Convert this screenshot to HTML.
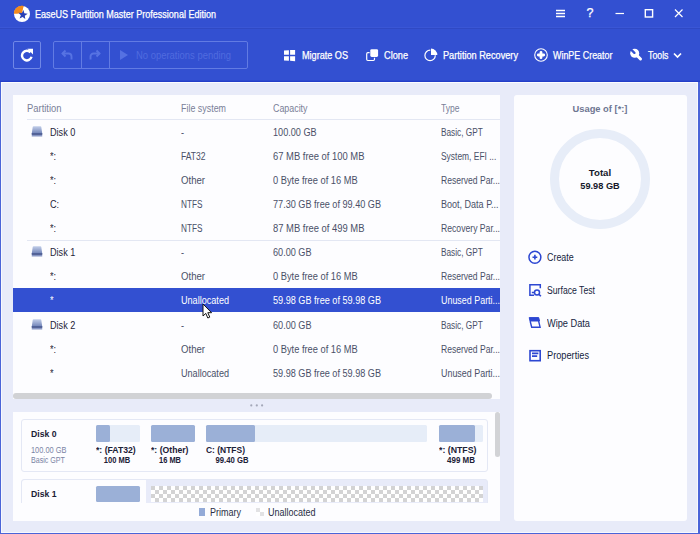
<!DOCTYPE html>
<html><head><meta charset="utf-8">
<style>
*{margin:0;padding:0;box-sizing:border-box}
html,body{width:700px;height:534px;overflow:hidden}
body{background:#e8ebf9;font-family:"Liberation Sans",sans-serif;position:relative;color:#2a2f45}
.abs{position:absolute}
.t{position:absolute;white-space:nowrap;line-height:12px;height:12px;font-size:10px;letter-spacing:0;transform:scaleX(.9);transform-origin:0 50%}
#win{position:absolute;left:0;top:0;width:700px;height:534px;border:1px solid #5b74dc;border-top:none}
#top{position:absolute;left:0;top:0;width:700px;height:82px;background:#3350d1}
#tsep{position:absolute;left:0;top:28px;width:700px;height:1px;background:#2f49c4}
.w{color:#fff;-webkit-text-stroke:0.250px #fff}
.hd{color:#7a8098}
.row{color:#4a5068}
.nm{color:#1f2438}
#lp{position:absolute;left:13px;top:95px;width:487px;height:304px;background:#fdfdff}
#bp{position:absolute;left:13px;top:412px;width:487px;height:109px;background:#fdfdff;overflow:hidden}
#rp{position:absolute;left:514px;top:95px;width:173px;height:426px;background:#fdfdff;border-radius:3px}

.hl{position:absolute;height:1px;background:#e3e7f3}
#sel{position:absolute;left:13px;top:288px;width:487px;height:24px;background:#3350d1}
.act{color:#151d3e}
.sel{color:#fff !important}
.g{color:#7a83a4}

</style></head><body>
<div id="top"></div><div id="tsep"></div><div class="abs" style="left:0;top:27px;width:700px;height:1px;background:#3a56d5"></div>

<div class="abs" style="left:0;top:81px;width:700px;height:1px;background:#233dc8"></div>
<div class="abs" style="left:0;top:80px;width:700px;height:1px;background:#2d49ce"></div>
<div class="abs" style="left:1px;top:82px;width:697px;height:1px;background:#fbfbff"></div>
<div class="abs" style="left:1px;top:82px;width:1px;height:451px;background:#f7f8fe"></div>
<div class="abs" style="left:697px;top:82px;width:1px;height:451px;background:#f7f8fe"></div>
<div class="abs" style="left:1px;top:532px;width:697px;height:1px;background:#f7f8fe"></div>
<div class="abs" style="left:0;top:82px;width:1px;height:452px;background:#4a64d8"></div>
<div class="abs" style="left:698px;top:82px;width:2px;height:452px;background:#4a64d8"></div>
<div class="abs" style="left:0;top:533px;width:700px;height:1px;background:#4a64d8"></div>
<!-- title -->
<svg class="abs" style="left:13.300px;top:4.600px" width="18" height="18" viewBox="0 0 18 18">
 <circle cx="9" cy="9" r="8" fill="#fff"/>
 <path d="M9 8.600L0.800 8.600A8.200 8.200 0 0 1 10.500 0.900L9.600 4.500A4.600 4.600 0 0 0 4.600 8.600Z" fill="#f28a1e"/>
 <path d="M9 8.600L0.800 8.600A8.200 8.200 0 0 1 10.500 0.900Z" fill="#f28a1e"/>
 <path d="M10.49 4.94L11.33 8.26L14.71 8.85L11.81 10.68L12.28 14.08L9.65 11.88L6.57 13.39L7.84 10.21L5.45 7.74L8.88 7.97Z" fill="#2b40b4"/>
</svg>
<div class="t w" style="left:35px;top:8.535px;transform:scaleX(0.902)">EaseUS Partition Master Professional Edition</div>

<!-- window controls -->
<svg class="abs" style="left:550px;top:4px" width="140" height="20" viewBox="0 0 140 20" fill="none" stroke="#fff" stroke-width="1.200">
 <path d="M6 6.500h9M6 9.500h9M6 12.500h9" stroke-width="1.400"/>
 <path d="M65.500 9.500h8.500" />
 <rect x="95.300" y="5.700" width="7.300" height="7.300" stroke-width="1.400"/>
 <path d="M125 5.500l7.500 7.500M132.500 5.500l-7.500 7.500"/>
</svg>
<div class="t w" style="left:586.5px;top:7.169px;font-size:12.5px;transform:scaleX(1)">?</div>

<!-- toolbar -->
<div class="abs" style="left:13px;top:41px;width:28px;height:28px;border:1px solid #7087e6;border-radius:2px"></div>
<svg class="abs" style="left:20px;top:48px" width="14" height="14" viewBox="0 0 14 14" fill="none" stroke="#fff" stroke-width="2.400">
 <path d="M10.400 4.400A4.800 4.800 0 1 0 11.500 8.700"/><path d="M7.400 0.800h5.600v5.600z" fill="#fff" stroke="none"/>
</svg>
<div class="abs" style="left:53px;top:41px;width:195px;height:28px;border:1px solid #627be3;border-radius:2px"></div>
<div class="abs" style="left:81px;top:42px;width:1px;height:26px;background:#627be3"></div>
<div class="abs" style="left:109px;top:42px;width:1px;height:26px;background:#627be3"></div>
<svg class="abs" style="left:60px;top:48px" width="14" height="14" viewBox="0 0 14 14" fill="none" stroke="#5773e3" stroke-width="1.900">
 <path d="M2.5 5.5h6a3 3 0 0 1 3 3v3"/><path d="M5.5 2.5l-3 3 3 3"/>
</svg>
<svg class="abs" style="left:88px;top:48px" width="14" height="14" viewBox="0 0 14 14" fill="none" stroke="#5773e3" stroke-width="1.900">
 <path d="M11.5 5.5h-6a3 3 0 0 0-3 3v3"/><path d="M8.500 2.5l3 3-3 3"/>
</svg>
<svg class="abs" style="left:119px;top:49px" width="10" height="12" viewBox="0 0 10 12"><path d="M1 1l8 5-8 5z" fill="#5571e2"/></svg>
<div class="t " style="left:136px;top:49.535px;color:#506bdf;transform:scaleX(0.944)">No operations pending</div>

<svg class="abs" style="left:284px;top:49.700px" width="12" height="12" viewBox="0 0 12 12" fill="#fff"><path d="M0 0.500L4.900 0.200V4.700H0z"/><path d="M6.100 0.100L11.100 -0.200V4.700H6.100z"/><path d="M0 6.200H4.900V10.700L0 10.400z"/><path d="M6.100 6.200H11.100V11.200L6.100 10.800z"/></svg>
<div class="t w" style="left:302px;top:49.535px;transform:scaleX(0.91)">Migrate OS</div>

<svg class="abs" style="left:366px;top:49px" width="13" height="13" viewBox="0 0 13 13"><rect x="0.700" y="3.700" width="7.800" height="7.800" rx="1.200" fill="none" stroke="#fff" stroke-width="1.200"/><rect x="3.600" y="-0.400" width="9.200" height="9.200" rx="1.800" fill="#3350d1"/><rect x="4.300" y="0.200" width="7.800" height="7.800" rx="1.400" fill="#fff"/></svg>
<div class="t w" style="left:384px;top:49.535px;transform:scaleX(0.919)">Clone</div>

<svg class="abs" style="left:424px;top:48px" width="15" height="14" viewBox="0 0 15 14"><circle cx="6.100" cy="7.400" r="5.200" fill="none" stroke="#fff" stroke-width="1.200"/><path d="M6.300 -0.300A7.500 7.500 0 0 1 13.800 7.200H6.300z" fill="#3350d1"/><path d="M7 0.600A6.300 6.300 0 0 1 13.300 6.900H7z" fill="#fff"/></svg>
<div class="t w" style="left:443px;top:49.535px;transform:scaleX(0.918)">Partition Recovery</div>

<svg class="abs" style="left:534px;top:48px" width="14" height="14" viewBox="0 0 14 14"><circle cx="7" cy="7" r="6.300" fill="none" stroke="#fff" stroke-width="1.100"/><path d="M7 4.300v5.400M4.300 7h5.400" stroke="#fff" stroke-width="2.800" stroke-linecap="round"/></svg>
<div class="t w" style="left:553px;top:49.535px;transform:scaleX(0.892)">WinPE Creator</div>

<svg class="abs" style="left:629px;top:48px" width="14" height="14" viewBox="0 0 14 14"><path d="M8 7.500l3.500 3.500" stroke="#fff" stroke-width="3" stroke-linecap="round"/><circle cx="5.700" cy="5.300" r="4.500" fill="#fff"/><path d="M1 0.500L5.400 4.900" stroke="#3350d1" stroke-width="2.300" stroke-linecap="round"/></svg>
<div class="t w" style="left:648.1px;top:49.535px;transform:scaleX(0.878)">Tools</div>
<svg class="abs" style="left:673px;top:52px" width="9" height="7" viewBox="0 0 9 7" fill="none" stroke="#fff" stroke-width="1.700"><path d="M1 1.500l3.500 3.500 3.500-3.500"/></svg>

<!-- left panel -->
<div id="lp"></div>
<div class="t hd" style="left:27px;top:102.535px;transform:scaleX(0.94)">Partition</div>
<div class="t hd" style="left:181px;top:102.535px;transform:scaleX(0.89)">File system</div>
<div class="t hd" style="left:273px;top:102.535px;transform:scaleX(0.887)">Capacity</div>
<div class="t hd" style="left:440.5px;top:102.535px;transform:scaleX(0.853)">Type</div>
<div class="hl" style="left:27px;top:119px;width:473px"></div>
<div class="hl" style="left:27px;top:240px;width:473px"></div>
<div id="sel"></div>
<svg class="abs" style="left:31px;top:126px" width="12" height="11" viewBox="0 0 12 11"><defs><linearGradient id="dg1" x1="0" y1="0" x2="0" y2="1"><stop offset="0" stop-color="#c3cfea"/><stop offset="1" stop-color="#6b7eb4"/></linearGradient></defs><path d="M2.600 0.200h6.800q0.800 0 0.900 0.800l1 7h-10.600l1-7q0.100-0.800 0.900-0.800z" fill="url(#dg1)"/><rect x="0.700" y="7.300" width="10.600" height="1.600" fill="#44548c"/><rect x="0.700" y="8.900" width="10.600" height="1.700" rx="0.600" fill="#8796c4"/></svg>
<div class="t nm " style="left:50px;top:126.535px;transform:scaleX(0.912)">Disk 0</div>
<div class="t row " style="left:181px;top:126.535px;transform:scaleX(0.912)">-</div>
<div class="t row " style="left:273px;top:126.535px;transform:scaleX(0.912)">100.00 GB</div>
<div class="t row " style="left:440.5px;top:126.535px;transform:scaleX(0.827)">Basic, GPT</div>
<div class="t nm " style="left:50px;top:150.535px;transform:scaleX(0.912)">*:</div>
<div class="t row " style="left:181px;top:150.535px;transform:scaleX(0.853)">FAT32</div>
<div class="t row " style="left:273px;top:150.535px;transform:scaleX(0.94)">67 MB free of 100 MB</div>
<div class="t row " style="left:440.5px;top:150.535px;transform:scaleX(0.843)">System, EFI ...</div>
<div class="t nm " style="left:50px;top:174.535px;transform:scaleX(0.912)">*:</div>
<div class="t row " style="left:181px;top:174.535px;transform:scaleX(0.96)">Other</div>
<div class="t row " style="left:273px;top:174.535px;transform:scaleX(0.929)">0 Byte free of 16 MB</div>
<div class="t row " style="left:440.5px;top:174.535px;transform:scaleX(0.856)">Reserved Par...</div>
<div class="t nm " style="left:50px;top:198.535px;transform:scaleX(0.912)">C:</div>
<div class="t row " style="left:181px;top:198.535px;transform:scaleX(0.823)">NTFS</div>
<div class="t row " style="left:273px;top:198.535px;transform:scaleX(0.912)">77.30 GB free of 99.40 GB</div>
<div class="t row " style="left:440.5px;top:198.535px;transform:scaleX(0.902)">Boot, Data P...</div>
<div class="t nm " style="left:50px;top:222.535px;transform:scaleX(0.912)">*:</div>
<div class="t row " style="left:181px;top:222.535px;transform:scaleX(0.823)">NTFS</div>
<div class="t row " style="left:273px;top:222.535px;transform:scaleX(0.94)">87 MB free of 499 MB</div>
<div class="t row " style="left:440.5px;top:222.535px;transform:scaleX(0.863)">Recovery Par...</div>
<svg class="abs" style="left:31px;top:246.4px" width="12" height="11" viewBox="0 0 12 11"><defs><linearGradient id="dg2" x1="0" y1="0" x2="0" y2="1"><stop offset="0" stop-color="#c3cfea"/><stop offset="1" stop-color="#6b7eb4"/></linearGradient></defs><path d="M2.600 0.200h6.800q0.800 0 0.900 0.800l1 7h-10.600l1-7q0.100-0.800 0.900-0.800z" fill="url(#dg2)"/><rect x="0.700" y="7.300" width="10.600" height="1.600" fill="#44548c"/><rect x="0.700" y="8.900" width="10.600" height="1.700" rx="0.600" fill="#8796c4"/></svg>
<div class="t nm " style="left:50px;top:246.535px;transform:scaleX(0.912)">Disk 1</div>
<div class="t row " style="left:181px;top:246.535px;transform:scaleX(0.912)">-</div>
<div class="t row " style="left:273px;top:246.535px;transform:scaleX(0.912)">60.00 GB</div>
<div class="t row " style="left:440.5px;top:246.535px;transform:scaleX(0.827)">Basic, GPT</div>
<div class="t nm " style="left:50px;top:270.535px;transform:scaleX(0.912)">*:</div>
<div class="t row " style="left:181px;top:270.535px;transform:scaleX(0.96)">Other</div>
<div class="t row " style="left:273px;top:270.535px;transform:scaleX(0.929)">0 Byte free of 16 MB</div>
<div class="t row " style="left:440.5px;top:270.535px;transform:scaleX(0.856)">Reserved Par...</div>
<div class="t nm sel" style="left:50px;top:294.535px;transform:scaleX(0.912)">*</div>
<div class="t row sel" style="left:181px;top:294.535px;transform:scaleX(0.909)">Unallocated</div>
<div class="t row sel" style="left:273px;top:294.535px;transform:scaleX(0.912)">59.98 GB free of 59.98 GB</div>
<div class="t row sel" style="left:440.5px;top:294.535px;transform:scaleX(0.892)">Unused Parti...</div>
<svg class="abs" style="left:31px;top:318.9px" width="12" height="11" viewBox="0 0 12 11"><defs><linearGradient id="dg3" x1="0" y1="0" x2="0" y2="1"><stop offset="0" stop-color="#c3cfea"/><stop offset="1" stop-color="#6b7eb4"/></linearGradient></defs><path d="M2.600 0.200h6.800q0.800 0 0.900 0.800l1 7h-10.600l1-7q0.100-0.800 0.900-0.800z" fill="url(#dg3)"/><rect x="0.700" y="7.300" width="10.600" height="1.600" fill="#44548c"/><rect x="0.700" y="8.900" width="10.600" height="1.700" rx="0.600" fill="#8796c4"/></svg>
<div class="t nm " style="left:50px;top:319.535px;transform:scaleX(0.912)">Disk 2</div>
<div class="t row " style="left:181px;top:319.535px;transform:scaleX(0.912)">-</div>
<div class="t row " style="left:273px;top:319.535px;transform:scaleX(0.912)">60.00 GB</div>
<div class="t row " style="left:440.5px;top:319.535px;transform:scaleX(0.827)">Basic, GPT</div>
<div class="t nm " style="left:50px;top:343.535px;transform:scaleX(0.912)">*:</div>
<div class="t row " style="left:181px;top:343.535px;transform:scaleX(0.96)">Other</div>
<div class="t row " style="left:273px;top:343.535px;transform:scaleX(0.929)">0 Byte free of 16 MB</div>
<div class="t row " style="left:440.5px;top:343.535px;transform:scaleX(0.856)">Reserved Par...</div>
<div class="t nm " style="left:50px;top:367.535px;transform:scaleX(0.912)">*</div>
<div class="t row " style="left:181px;top:367.535px;transform:scaleX(0.909)">Unallocated</div>
<div class="t row " style="left:273px;top:367.535px;transform:scaleX(0.912)">59.98 GB free of 59.98 GB</div>
<div class="t row " style="left:440.5px;top:367.535px;transform:scaleX(0.892)">Unused Parti...</div>
<div class="abs" style="left:13px;top:393px;width:479px;height:6px;background:#d1d2d5;border-radius:3px"></div>

<svg class="abs" style="left:245px;top:400px" width="24" height="10" viewBox="0 0 24 10" fill="#a3a7b8"><circle cx="6.300" cy="5.400" r="1.100"/><circle cx="11.800" cy="5.400" r="1.100"/><circle cx="17.100" cy="5.400" r="1.100"/></svg>
<!-- bottom panel -->
<div id="bp">
 <div class="abs" style="left:8px;top:7px;width:467px;height:53px;border:1px solid #e4e8f5;border-radius:3px"></div>
 <div class="abs" style="left:8px;top:67px;width:467px;height:52px;border:1px solid #e4e8f5;border-radius:3px;background:#e8ebf9"></div>
 <div class="abs" style="left:9px;top:68px;width:124px;height:50px;background:#fdfdff;border-radius:3px 0 0 3px"></div>
 <!-- disk0 -->
 <div class="abs" style="left:83px;top:13px;width:44px;height:17px;background:#e6edf8;border-radius:1.5px"></div>
 <div class="abs" style="left:83px;top:13px;width:14px;height:17px;background:#9bb0d7;border-radius:1.5px"></div>
 <div class="abs" style="left:138px;top:13px;width:44px;height:17px;background:#9bb0d7;border-radius:1.5px"></div>
 <div class="abs" style="left:193px;top:13px;width:221px;height:17px;background:#e6edf8;border-radius:1.5px"></div>
 <div class="abs" style="left:193px;top:13px;width:49px;height:17px;background:#9bb0d7;border-radius:1.5px"></div>
 <div class="abs" style="left:426px;top:13px;width:44px;height:17px;background:#e6edf8;border-radius:1.5px"></div>
 <div class="abs" style="left:426px;top:13px;width:36px;height:17px;background:#9bb0d7;border-radius:1.5px"></div>
 <!-- disk1 -->
 <div class="abs" style="left:83px;top:74px;width:44px;height:16px;background:#9bb0d7;border-radius:1.5px"></div>
 <div class="abs" style="left:138px;top:74px;width:332px;height:16px;background-color:#fff;background-image:conic-gradient(#fff 25%,#d3d3d4 0 50%,#fff 0 75%,#d3d3d4 0);background-size:8px 8px"></div>
 <!-- legend -->
 <div class="abs" style="left:0;top:91px;width:487px;height:18px;background:#fdfdff"></div>
 <div class="abs" style="left:185.500px;top:96px;width:6px;height:8px;background:#94abd8"></div>
 <div class="abs" style="left:243px;top:96px;width:8px;height:8px;background-image:conic-gradient(#fff 25%,#e2e2e4 0 50%,#fff 0 75%,#e2e2e4 0);background-size:8px 8px"></div>
<div class="t " style="left:17.5px;top:15.812px;font-size:9.2px;font-weight:bold;color:#1b2036;transform:scaleX(0.941)">Disk 0</div>
<div class="t g" style="left:17.5px;top:31.812px;font-size:9.2px;transform:scaleX(0.807)">100.00 GB</div>
<div class="t g" style="left:17.5px;top:41.812px;font-size:9.2px;transform:scaleX(0.773)">Basic GPT</div>
<div class="t " style="left:83px;top:31.812px;font-size:9.2px;font-weight:bold;color:#1b2036;transform:scaleX(0.942)">*: (FAT32)</div>
<div class="t " style="left:104.4px;transform-origin:50% 50%;top:41.812px;font-size:9.2px;font-weight:bold;color:#1b2036;transform:translateX(-50%) scaleX(0.82)">100 MB</div>
<div class="t " style="left:138px;top:31.812px;font-size:9.2px;font-weight:bold;color:#1b2036;transform:scaleX(0.941)">*: (Other)</div>
<div class="t " style="left:157px;transform-origin:50% 50%;top:41.812px;font-size:9.2px;font-weight:bold;color:#1b2036;transform:translateX(-50%) scaleX(0.812)">16 MB</div>
<div class="t " style="left:193px;top:31.812px;font-size:9.2px;font-weight:bold;color:#1b2036;transform:scaleX(0.92)">C: (NTFS)</div>
<div class="t " style="left:219.4px;transform-origin:50% 50%;top:41.812px;font-size:9.2px;font-weight:bold;color:#1b2036;transform:translateX(-50%) scaleX(0.838)">99.40 GB</div>
<div class="t " style="left:425.5px;top:31.812px;font-size:9.2px;font-weight:bold;color:#1b2036;transform:scaleX(0.953)">*: (NTFS)</div>
<div class="t " style="left:447.8px;transform-origin:50% 50%;top:41.812px;font-size:9.2px;font-weight:bold;color:#1b2036;transform:translateX(-50%) scaleX(0.869)">499 MB</div>
<div class="t " style="left:17.5px;top:75.812px;font-size:9.2px;font-weight:bold;color:#1b2036;transform:scaleX(0.941)">Disk 1</div>
<div class="t " style="left:197px;top:94.535px;color:#2a2f45;transform:scaleX(0.9)">Primary</div>
<div class="t " style="left:255px;top:94.535px;color:#2a2f45;transform:scaleX(0.899)">Unallocated</div>
</div>
<div class="abs" style="left:495px;top:412px;width:5px;height:45px;background:#d2d3d6;border-radius:3px"></div>
<!-- right panel -->
<div id="rp"></div>
<div class="t " style="left:599.6px;transform-origin:50% 50%;top:102.778px;font-size:9.3px;font-weight:bold;color:#6e7692;transform:translateX(-50%) scaleX(1.004)">Usage of [*:]</div>
<div class="t " style="left:600px;transform-origin:50% 50%;top:166.812px;font-size:9.2px;font-weight:bold;color:#14182a;transform:translateX(-50%) scaleX(1.047)">Total</div>
<div class="t " style="left:600px;transform-origin:50% 50%;top:179.812px;font-size:9.2px;font-weight:bold;color:#14182a;transform:translateX(-50%) scaleX(1.001)">59.98 GB</div>
<svg class="abs" style="left:550px;top:129px" width="100" height="100" viewBox="0 0 100 100"><circle cx="50" cy="50" r="45.500" fill="none" stroke="#e7edf8" stroke-width="9"/></svg>

<svg class="abs" style="left:522px;top:244px" width="30" height="130" viewBox="0 0 30 130" fill="none" stroke="#2d47d2" stroke-width="1.500">
 <circle cx="12.900" cy="13.200" r="5.950"/><path d="M12.900 10.800v4.800M10.500 13.200h4.800" stroke-width="1.600"/>
 <path d="M18.300 44.200V40.700H7.900v10.600h4.200M9.800 48.400h2.300"/><circle cx="15" cy="48.500" r="2.500"/><path d="M16.900 50.400l2 1.900"/>
 <path d="M7.200 73.600h9.500l0.800 3.400h-9.500z" fill="#2d47d2" stroke-width="1"/><path d="M8.100 77l1.600 6.200h8.400l-1.500-6.200" stroke-width="1.400"/>
 <rect x="8" y="106.700" width="10.200" height="10" stroke-width="1.600"/><path d="M10 109.400h6.400M10 112.200h5.200" stroke-width="1.700"/>
</svg>
<div class="t act" style="left:547px;top:251.535px;transform:scaleX(0.89)">Create</div>
<div class="t act" style="left:547px;top:284.535px;transform:scaleX(0.866)">Surface Test</div>
<div class="t act" style="left:547px;top:317.535px;transform:scaleX(0.921)">Wipe Data</div>
<div class="t act" style="left:547px;top:349.535px;transform:scaleX(0.922)">Properties</div>
<!-- cursor -->
<svg class="abs" style="left:202px;top:303px" width="12" height="17" viewBox="0 0 12 17"><path d="M1 1v12l2.800-2.600 2 4.600 2-0.900-2-4.400h3.800z" fill="#fff" stroke="#111" stroke-width="1"/></svg>

</body></html>
